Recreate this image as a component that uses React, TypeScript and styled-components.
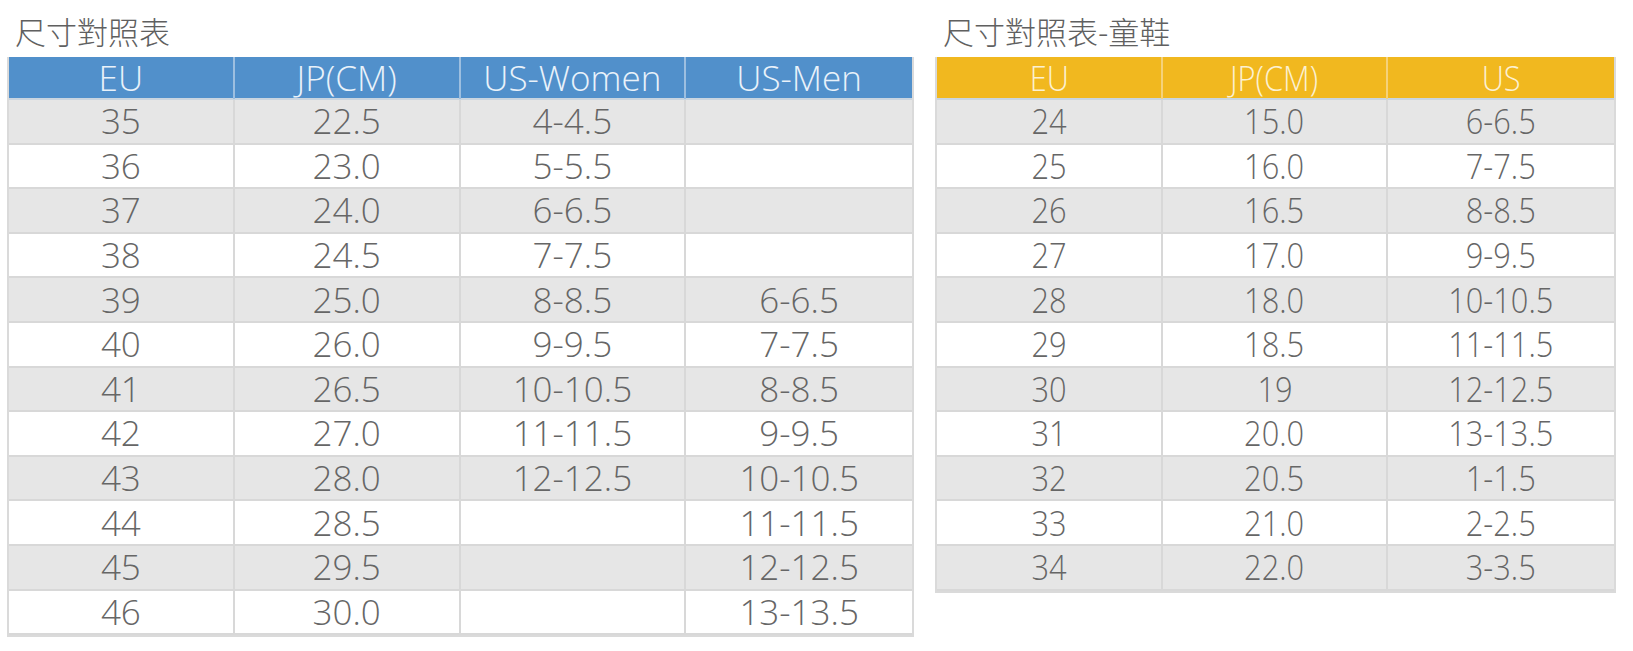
import React from "react";
import styled, { createGlobalStyle } from "styled-components";

const GlobalStyle = createGlobalStyle`
  html, body {
    margin: 0;
    padding: 0;
    background: #ffffff;
  }
  body {
    font-family: "Open Sans", "Noto Sans CJK TC", sans-serif;
  }
`;

const Page = styled.div`
  display: flex;
  align-items: flex-start;
  gap: 21px;
  padding: 0 0 0 7px;
`;

const Block = styled.div<{ $width: number }>`
  width: ${({ $width }) => $width}px;
  display: flex;
  flex-direction: column;
`;

const Title = styled.div`
  height: 57px;
  box-sizing: border-box;
  padding: 12px 0 0 8px;
  font-family: "Noto Sans CJK TC", "Open Sans", sans-serif;
  font-weight: 300;
  font-size: 31px;
  line-height: 38px;
  color: #606060;
  white-space: nowrap;
`;

const Table = styled.div`
  border: 2px solid #dadada;
  border-top: none;
  box-sizing: border-box;
`;

const Row = styled.div<{ $cols: number; $bg: string; $head?: boolean }>`
  display: grid;
  grid-template-columns: repeat(${({ $cols }) => $cols}, 1fr);
  height: ${({ $head }) => ($head ? 43 : 44.6)}px;
  box-sizing: border-box;
  background: ${({ $bg }) => $bg};
  border-bottom: 2px solid ${({ $head }) => ($head ? "#c9d5e0" : "#d8d8d8")};
`;

const Cell = styled.div<{ $line: string; $color: string; $squeeze: number }>`
  display: flex;
  align-items: center;
  justify-content: center;
  border-right: 2px solid ${({ $line }) => $line};
  color: ${({ $color }) => $color};
  font-family: "Open Sans", sans-serif;
  font-weight: 300;
  font-size: 35px;
  line-height: 42px;
  &:last-child {
    border-right: none;
  }
  span {
    display: inline-block;
    transform: scaleX(${({ $squeeze }) => $squeeze});
    white-space: nowrap;
  }
`;

type SizeTable = {
  title: string;
  width: number;
  head: string[];
  headBg: string;
  headLine: string;
  headColor: string;
  squeeze: number;
  rows: string[][];
};

const adult: SizeTable = {
  title: "尺寸對照表",
  width: 907,
  head: ["EU", "JP(CM)", "US-Women", "US-Men"],
  headBg: "#5190cb",
  headLine: "#9dbfe0",
  headColor: "#e9f2fa",
  squeeze: 1,
  rows: [
    ["35", "22.5", "4-4.5", ""],
    ["36", "23.0", "5-5.5", ""],
    ["37", "24.0", "6-6.5", ""],
    ["38", "24.5", "7-7.5", ""],
    ["39", "25.0", "8-8.5", "6-6.5"],
    ["40", "26.0", "9-9.5", "7-7.5"],
    ["41", "26.5", "10-10.5", "8-8.5"],
    ["42", "27.0", "11-11.5", "9-9.5"],
    ["43", "28.0", "12-12.5", "10-10.5"],
    ["44", "28.5", "", "11-11.5"],
    ["45", "29.5", "", "12-12.5"],
    ["46", "30.0", "", "13-13.5"],
  ],
};

const kids: SizeTable = {
  title: "尺寸對照表-童鞋",
  width: 681,
  head: ["EU", "JP(CM)", "US"],
  headBg: "#f1b81f",
  headLine: "#f5d27a",
  headColor: "#fcf1d2",
  squeeze: 0.88,
  rows: [
    ["24", "15.0", "6-6.5"],
    ["25", "16.0", "7-7.5"],
    ["26", "16.5", "8-8.5"],
    ["27", "17.0", "9-9.5"],
    ["28", "18.0", "10-10.5"],
    ["29", "18.5", "11-11.5"],
    ["30", "19", "12-12.5"],
    ["31", "20.0", "13-13.5"],
    ["32", "20.5", "1-1.5"],
    ["33", "21.0", "2-2.5"],
    ["34", "22.0", "3-3.5"],
  ],
};

const SizeChart: React.FC<{ data: SizeTable }> = ({ data }) => {
  const cols = data.head.length;
  return (
    <Block $width={data.width}>
      <Title>{data.title}</Title>
      <Table>
        <Row $cols={cols} $bg={data.headBg} $head>
          {data.head.map((h) => (
            <Cell
              key={h}
              $line={data.headLine}
              $color={data.headColor}
              $squeeze={data.squeeze}
            >
              <span>{h}</span>
            </Cell>
          ))}
        </Row>
        {data.rows.map((r, i) => (
          <Row key={i} $cols={cols} $bg={i % 2 === 0 ? "#e6e6e6" : "#ffffff"}>
            {r.map((v, j) => (
              <Cell key={j} $line="#d8d8d8" $color="#666666" $squeeze={data.squeeze}>
                <span>{v}</span>
              </Cell>
            ))}
          </Row>
        ))}
      </Table>
    </Block>
  );
};

export default function App() {
  return (
    <>
      <GlobalStyle />
      <Page>
        <SizeChart data={adult} />
        <SizeChart data={kids} />
      </Page>
    </>
  );
}
